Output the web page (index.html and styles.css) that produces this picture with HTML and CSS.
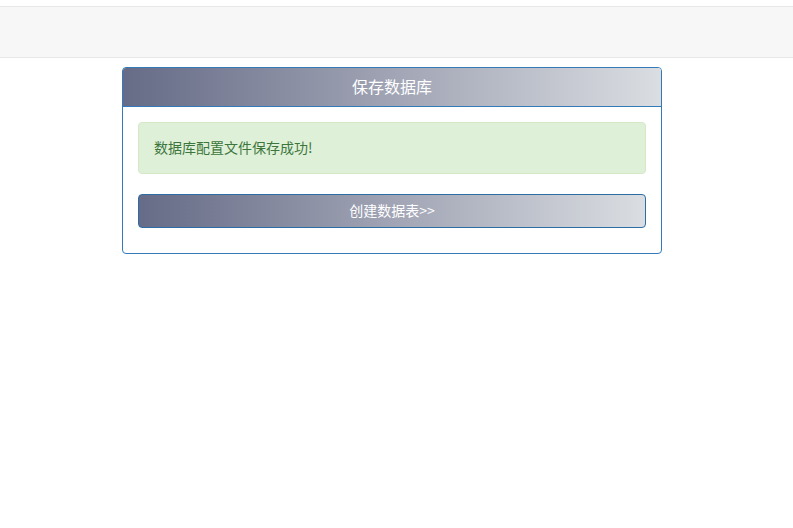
FILE: index.html
```html
<!DOCTYPE html>
<html lang="zh">
<head>
<meta charset="utf-8">
<title>保存数据库</title>
<link rel="stylesheet" href="styles.css">
</head>
<body>
<div class="navbar"></div>
<div class="container">
  <div class="panel">
    <div class="panel-heading">保存数据库</div>
    <div class="panel-body">
      <div class="alert">数据库配置文件保存成功!</div>
      <button class="btn">创建数据表&gt;&gt;</button>
    </div>
  </div>
</div>
</body>
</html>
```

FILE: styles.css
```css
* { box-sizing: border-box; }
html, body { margin: 0; padding: 0; background: #fff; }
body {
  font-family: "Microsoft YaHei", "Noto Sans CJK SC", "Liberation Sans", sans-serif;
  font-size: 14px;
  line-height: 20px;
  color: #333;
  padding-top: 6px;
}
.navbar {
  height: 52px;
  background: #f7f7f7;
  border-top: 1px solid #e7e7e7;
  border-bottom: 1px solid #e7e7e7;
}
.container {
  padding-left: 122px;
  padding-top: 9px;
}
.panel {
  width: 540px;
  border: 1px solid #337ab7;
  border-radius: 4px;
  background: #fff;
}
.panel-heading {
  height: 39px;
  line-height: 37px;
  text-align: center;
  color: #fff;
  font-size: 16px;
  background: linear-gradient(to right, #666b87, #dadde1);
  border-bottom: 1px solid #337ab7;
  border-radius: 3px 3px 0 0;
}
.panel-body {
  padding: 15px 15px 15px;
}
.alert {
  height: 52px;
  padding: 14px 15px 16px;
  background: #dff0d8;
  border: 1px solid #d6e9c6;
  border-radius: 4px;
  color: #3c763d;
  margin-bottom: 20px;
}
.btn {
  display: block;
  width: 100%;
  height: 34px;
  padding: 5px 12px 7px;
  font: inherit;
  color: #fff;
  text-align: center;
  background: linear-gradient(to right, #666b87, #dadde1);
  border: 1px solid #2e6da4;
  border-radius: 4px;
  margin-bottom: 10px;
  cursor: pointer;
}
```
